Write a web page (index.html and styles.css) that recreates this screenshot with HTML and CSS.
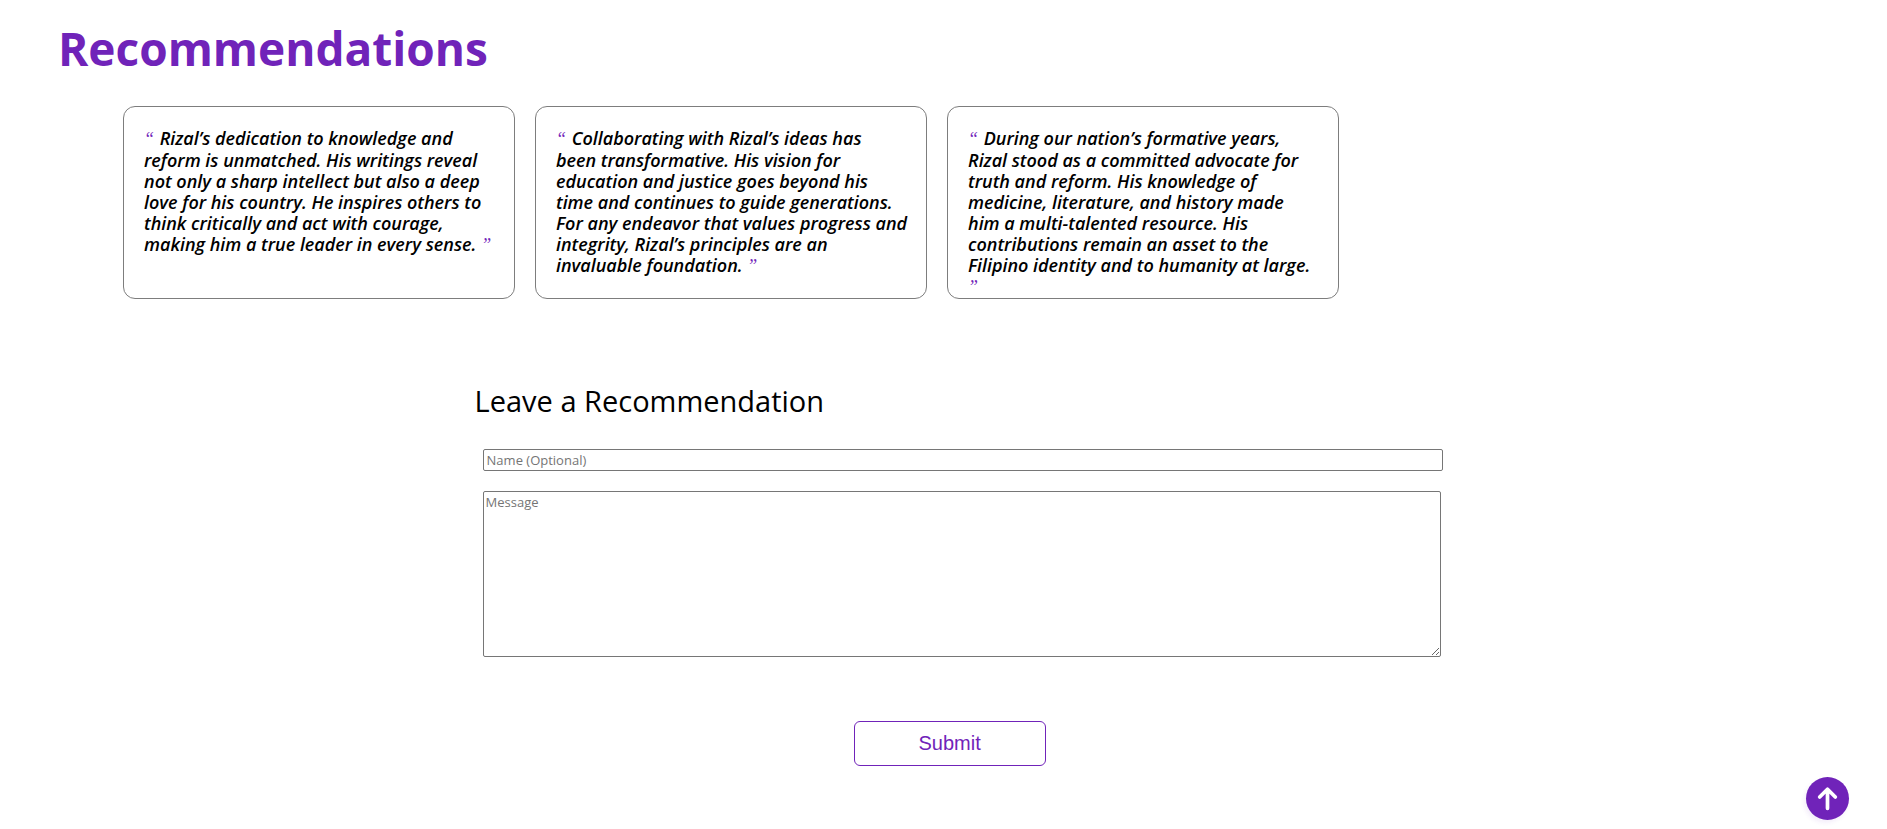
FILE: index.html
```html
<!DOCTYPE html>
<html lang="en">
<head>
<meta charset="utf-8">
<title>Recommendations</title>
<meta name="viewport" content="width=device-width, initial-scale=1">
<link rel="stylesheet" href="styles.css">
</head>
<body>
<main class="page">
  <section class="recommendations" id="top">
    <h1 class="title">Recommendations</h1>
    <div class="cards">
      <blockquote class="card"><span class="mark">“</span> Rizal’s dedication to knowledge and<br>reform is unmatched. His writings reveal<br>not only a sharp intellect but also a deep<br>love for his country. He inspires others to<br>think critically and act with courage,<br>making him a true leader in every sense. <span class="mark">”</span></blockquote>
      <blockquote class="card"><span class="mark">“</span> Collaborating with Rizal’s ideas has<br>been transformative. His vision for<br>education and justice goes beyond his<br>time and continues to guide generations.<br>For any endeavor that values progress and<br>integrity, Rizal’s principles are an<br>invaluable foundation. <span class="mark">”</span></blockquote>
      <blockquote class="card"><span class="mark">“</span> During our nation’s formative years,<br>Rizal stood as a committed advocate for<br>truth and reform. His knowledge of<br>medicine, literature, and history made<br>him a multi-talented resource. His<br>contributions remain an asset to the<br>Filipino identity and to humanity at large.<br><span class="mark">”</span></blockquote>
    </div>
  </section>
  <form class="form">
    <h2 class="subtitle">Leave a Recommendation</h2>
    <input class="field name" type="text" placeholder="Name (Optional)" aria-label="Name (Optional)">
    <textarea class="field message" placeholder="Message" aria-label="Message"></textarea>
    <button class="submit" type="button">Submit</button>
  </form>
</main>
<a class="to-top" href="#top" aria-label="Back to top">
  <svg viewBox="0 0 44 44" width="43" height="43" aria-hidden="true"><path d="M22 32V13M14 20.500l8-8 8 8" fill="none" stroke="#fff" stroke-width="3.800" stroke-linecap="round" stroke-linejoin="round"/></svg>
</a>
</body>
</html>
```
FILE: styles.css
```css
* { box-sizing: border-box; }

body {
  margin: 0;
  background: #fff;
  color: #000;
  font-family: "Trebuchet MS", "Open Sans", sans-serif;
}

.recommendations { padding: 18px 58px 0; }

.title {
  margin: 0;
  color: #7023b9;
  font-size: 46px;
  line-height: 60px;
  font-weight: 700;
}

.cards {
  display: flex;
  gap: 20px;
  padding: 28px 0 0 65px;
}

.card {
  flex: 0 0 392px;
  min-height: 192px;
  margin: 0;
  padding: 21px 0 0 20px;
  border: 1px solid #7d7d7d;
  border-radius: 12px;
  font-size: 18px;
  line-height: 21px;
  font-weight: 600;
  font-style: italic;
  white-space: nowrap;
}

.mark {
  padding-right: 1px;
  color: #7023b9;
  font-family: "Liberation Serif", serif;
  font-weight: 400;
}

.form {
  display: grid;
  padding: 84px 24.5% 0 25.15%;
}

.subtitle {
  margin: 0;
  font-size: 29px;
  line-height: 36px;
  font-weight: 500;
}

.field {
  margin: 0 -18px 20px 8px;
  border: 1px solid #767676;
  border-radius: 2px;
  background: #fff;
  font-family: inherit;
  font-size: 13px;
  line-height: 16px;
  font-weight: 500;
}

.field::placeholder { color: #757575; }

.name {
  height: 22px;
  margin-top: 30px;
  padding: 1px 3px;
}

.message {
  height: 166px;
  margin-right: -16px;
  padding: 2px;
}

.submit {
  justify-self: center;
  width: 192px;
  height: 45px;
  margin-top: 44px;
  border: 1px solid #7023b9;
  border-radius: 6px;
  background: #fff;
  color: #7023b9;
  font-family: "Liberation Sans", Arial, sans-serif;
  font-size: 20px;
}

.to-top {
  position: fixed;
  right: 38px;
  bottom: 9px;
  width: 43px;
  height: 43px;
  border-radius: 50%;
  background: #7023b9;
  box-shadow: -2px 3px 4px rgba(112, 35, 185, 0.08);
}

.to-top svg { display: block; }
```
